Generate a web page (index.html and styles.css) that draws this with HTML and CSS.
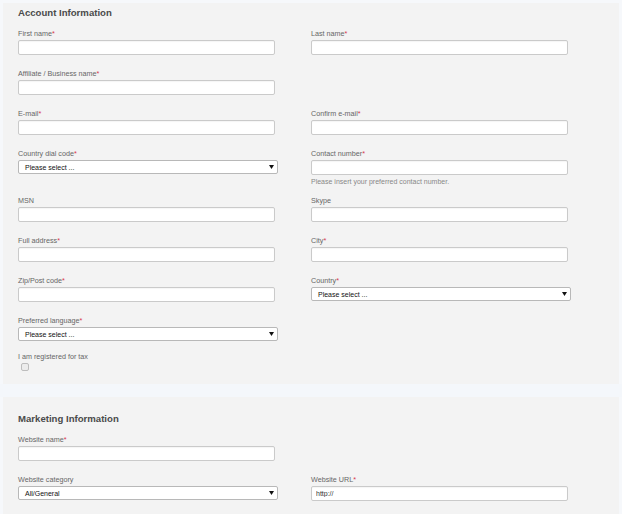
FILE: index.html
```html
<!DOCTYPE html>
<html>
<head>
<meta charset="utf-8">
<link rel="stylesheet" href="styles.css">
</head>
<body>
<div class="page">
  <section class="panel panel-first">
    <h2 class="heading">Account Information</h2>
    <div class="grid">
      <div class="field"><label class="label">First name<span class="req">*</span></label><input class="input" type="text"></div>
      <div class="field"><label class="label">Last name<span class="req">*</span></label><input class="input" type="text"></div>

      <div class="field"><label class="label">Affiliate / Business name<span class="req">*</span></label><input class="input" type="text"></div>
      <div class="field empty"></div>

      <div class="field"><label class="label">E-mail<span class="req">*</span></label><input class="input" type="text"></div>
      <div class="field"><label class="label">Confirm e-mail<span class="req">*</span></label><input class="input" type="text"></div>

      <div class="field"><label class="label">Country dial code<span class="req">*</span></label>
        <div class="select"><span>Please select ...</span><svg class="arrow" width="5" height="4" viewBox="0 0 5 4"><polygon points="0,0 5,0 2.5,4" fill="#111"/></svg></div>
      </div>
      <div class="field"><label class="label">Contact number<span class="req">*</span></label><input class="input" type="text">
        <p class="help">Please insert your preferred contact number.</p>
      </div>

      <div class="field"><label class="label">MSN</label><input class="input" type="text"></div>
      <div class="field"><label class="label">Skype</label><input class="input" type="text"></div>

      <div class="field"><label class="label">Full address<span class="req">*</span></label><input class="input" type="text"></div>
      <div class="field"><label class="label">City<span class="req">*</span></label><input class="input" type="text"></div>

      <div class="field"><label class="label">Zip/Post code<span class="req">*</span></label><input class="input" type="text"></div>
      <div class="field"><label class="label">Country<span class="req">*</span></label>
        <div class="select"><span>Please select ...</span><svg class="arrow" width="5" height="4" viewBox="0 0 5 4"><polygon points="0,0 5,0 2.5,4" fill="#111"/></svg></div>
      </div>

      <div class="field"><label class="label">Preferred language<span class="req">*</span></label>
        <div class="select"><span>Please select ...</span><svg class="arrow" width="5" height="4" viewBox="0 0 5 4"><polygon points="0,0 5,0 2.5,4" fill="#111"/></svg></div>
      </div>
      <div class="field empty"></div>

      <div class="field tax last"><label class="label">I am registered for tax</label><input class="check" type="checkbox"></div>
    </div>
  </section>

  <div class="band"></div>

  <section class="panel panel-second">
    <h2 class="heading">Marketing Information</h2>
    <div class="grid">
      <div class="field"><label class="label">Website name<span class="req">*</span></label><input class="input" type="text"></div>
      <div class="field empty"></div>

      <div class="field"><label class="label">Website category</label>
        <div class="select"><span>All/General</span><svg class="arrow" width="5" height="4" viewBox="0 0 5 4"><polygon points="0,0 5,0 2.5,4" fill="#111"/></svg></div>
      </div>
      <div class="field"><label class="label">Website URL<span class="req">*</span></label><input class="input" type="text" value="http://"></div>
    </div>
  </section>
</div>
</body>
</html>
```
FILE: styles.css
```css
html, body {
  margin: 0;
  padding: 0;
  background: #f6f8fb;
  font-family: "Liberation Sans", Arial, sans-serif;
}

.page {
  padding-top: 3px;
}

.panel {
  background: #f3f3f3;
  margin: 0 3px;
  padding-left: 15px;
}

.panel-first {
  padding-top: 3px;
  padding-bottom: 13px;
}

.band {
  height: 13px;
  background: #f4f7fb;
}

.panel-second {
  padding-top: 15px;
  padding-bottom: 20px;
}

.heading {
  margin: 0 0 9px 0;
  font-size: 9.6px;
  line-height: 14px;
  font-weight: bold;
  color: #4a4a4a;
}

.grid {
  display: grid;
  grid-template-columns: 260px 260px;
  column-gap: 33px;
  align-items: start;
}

.field {
  margin-bottom: 14px;
}

.field.last {
  margin-bottom: 0;
}

.tax {
  margin-top: -3px;
}

.label {
  display: block;
  font-size: 7.2px;
  line-height: 10px;
  color: #666;
  margin-bottom: 1px;
}

.req {
  color: #d9334a;
}

.input {
  display: block;
  box-sizing: border-box;
  width: 257px;
  height: 15px;
  margin: 0;
  padding: 0 4px;
  border: 1px solid #cacaca;
  border-radius: 2px;
  background: #fff;
  box-shadow: inset 0 1px 1px rgba(0, 0, 0, 0.04);
  font-family: "Liberation Sans", Arial, sans-serif;
  font-size: 7px;
  color: #333;
  outline: none;
}

.select {
  box-sizing: border-box;
  width: 260px;
  height: 14px;
  display: flex;
  align-items: center;
  justify-content: space-between;
  padding: 0 3px 0 6px;
  border: 1px solid #b8b8b8;
  border-radius: 2px;
  background: #fff;
  font-size: 7px;
  color: #111;
}

.arrow {
  display: block;
}

.help {
  margin: 2px 0 -4px 0;
  font-size: 7px;
  line-height: 9px;
  color: #888;
}

.check {
  -webkit-appearance: none;
  appearance: none;
  display: block;
  box-sizing: border-box;
  width: 8px;
  height: 8px;
  margin: 1px 0 0 3px;
  border: 1px solid #bdbdbd;
  border-radius: 2px;
  background: #ececec;
}
```
